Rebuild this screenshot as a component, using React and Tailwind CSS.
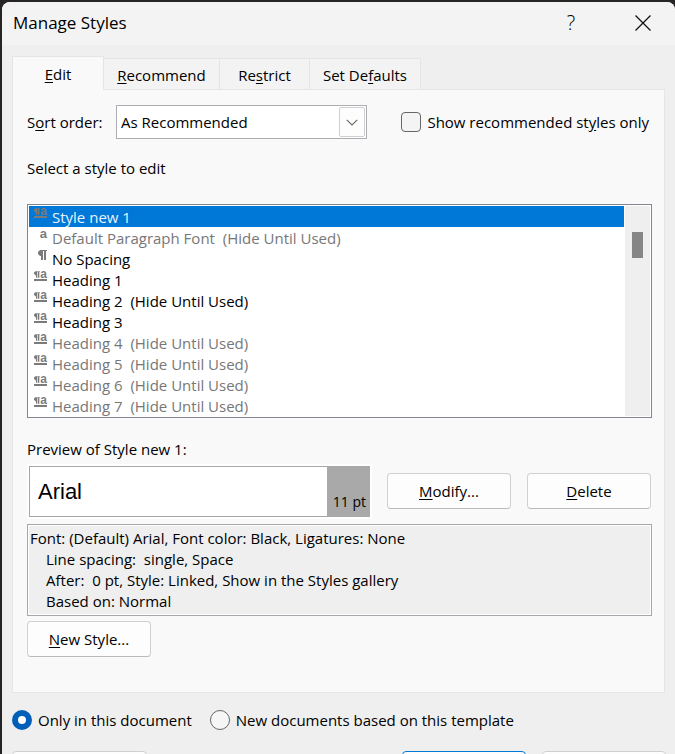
import React, { useState } from "react";

const STYLES = [
  { name: "Style new 1", kind: "linked" },
  { name: "Default Paragraph Font  (Hide Until Used)", kind: "char", dim: true },
  { name: "No Spacing", kind: "para" },
  { name: "Heading 1", kind: "linked" },
  { name: "Heading 2  (Hide Until Used)", kind: "linked" },
  { name: "Heading 3", kind: "linked" },
  { name: "Heading 4  (Hide Until Used)", kind: "linked", dim: true },
  { name: "Heading 5  (Hide Until Used)", kind: "linked", dim: true },
  { name: "Heading 6  (Hide Until Used)", kind: "linked", dim: true },
  { name: "Heading 7  (Hide Until Used)", kind: "linked", dim: true },
];

function Pilcrow({ className }) {
  return (
    <svg viewBox="0 0 9 10" className={className} fill="currentColor" aria-hidden="true">
      <path d="M2 0h7v1H8v9H6V1H5v9H3V6H2L0 4V2z" />
    </svg>
  );
}

function KindIcon({ kind }) {
  if (kind === "char") {
    return <span className="font-['Liberation_Sans',sans-serif] text-[13px] leading-[9px] font-bold">a</span>;
  }
  if (kind === "para") return <Pilcrow className="h-[10px] w-[9px]" />;
  return (
    <span className="flex h-[10px] w-[13px] items-start justify-between border-b-2 border-current">
      <Pilcrow className="h-[7px] w-[6px]" />
      <span className="font-['Liberation_Sans',sans-serif] text-xs leading-[6px] font-bold">a</span>
    </span>
  );
}

function Button({ children, className = "", ...rest }) {
  return (
    <button
      type="button"
      className={`h-9 shrink-0 rounded border bg-[#fdfdfd] ${className}`}
      {...rest}
    >
      {children}
    </button>
  );
}

function Tab({ children, active, className }) {
  return (
    <button
      type="button"
      role="tab"
      aria-selected={!!active}
      className={
        active
          ? `relative -mb-px h-[34px] border border-b-0 border-[#e5e5e5] bg-[#f9f9f9] pt-px ${className}`
          : `h-[31px] border-t border-r border-[#e5e5e5] bg-[#f3f3f3] pt-0.5 ${className}`
      }
    >
      {children}
    </button>
  );
}

function Radio({ label, checked, onChange }) {
  return (
    <label className="flex items-center gap-1.5">
      <input
        type="radio"
        name="scope"
        checked={checked}
        onChange={onChange}
        className="size-5 appearance-none rounded-full border border-[#666] bg-[#f6f6f6] checked:border-6 checked:border-[#005fb8] checked:bg-white"
      />
      <span className="pt-0.5">{label}</span>
    </label>
  );
}

export default function App() {
  const [selected, setSelected] = useState(0);
  const [scope, setScope] = useState("doc");
  const [only, setOnly] = useState(false);

  return (
    <div className="h-screen overflow-hidden bg-[#262424] pt-0.5 pl-0.5 font-['Open_Sans','Noto_Sans',sans-serif] text-[15px] leading-[21px] text-black [&_u]:underline-offset-2">
      <div className="min-h-full rounded-t-lg bg-[#efefef]">
        <header className="flex h-[43px] items-center rounded-t-lg bg-[#f3f3f3] pb-0.5 pl-[11px]">
          <h1 className="flex-1 text-[17px]">Manage Styles</h1>
          <button type="button" aria-label="Help" className="w-10 text-xl font-light">?</button>
          <button type="button" aria-label="Close" className="ml-5 flex w-16 justify-center">
            <svg viewBox="0 0 16 16" className="size-4" fill="none" stroke="#111" strokeWidth="1.3">
              <path d="M.5.5l15 15M15.5.5l-15 15" />
            </svg>
          </button>
        </header>

        <main className="px-2.5 pt-[11px]">
          <div role="tablist" className="flex items-end">
            <Tab active className="w-[92px]">
              <u>E</u>dit
            </Tab>
            <Tab className="w-[116px]">
              <u>R</u>ecommend
            </Tab>
            <Tab className="w-[90px]">
              Re<u>s</u>trict
            </Tab>
            <Tab className="w-[111px]">
              Set De<u>f</u>aults
            </Tab>
          </div>

          <section className="border border-[#e5e5e5] bg-[#f9f9f9] pt-[15px] pr-3 pb-[35px] pl-3.5">
            <div className="flex items-center">
              <label htmlFor="sort" className="w-[89px]">
                S<u>o</u>rt order:
              </label>
              <div className="grid w-[251px]">
                <select
                  id="sort"
                  className="col-start-1 row-start-1 h-[34px] appearance-none border border-[#acacb2] bg-white pl-1 outline-none"
                >
                  <option>As Recommended</option>
                  <option>Alphabetical</option>
                </select>
                <span className="pointer-events-none col-start-1 row-start-1 mr-0.5 flex h-[30px] w-[26px] items-center justify-center self-center justify-self-end rounded-xs border border-[#cfcfcf] bg-[#fdfdfd]">
                  <svg viewBox="0 0 12 7" className="h-[7px] w-3" fill="none" stroke="#666" strokeWidth="1.1">
                    <path d="M.8.8L6 6l5.200-5.200" />
                  </svg>
                </span>
              </div>
              <label className="ml-auto flex items-center gap-1.5 pr-[3px] whitespace-nowrap">
                <input
                  type="checkbox"
                  checked={only}
                  onChange={(e) => setOnly(e.target.checked)}
                  className="size-5 appearance-none rounded border border-[#666] bg-[#f4f4f4] checked:bg-[#005fb8]"
                />
                <span>
                  Show recommended st<u>y</u>les only
                </span>
              </label>
            </div>

            <p className="mt-[19px]" id="pick">
              Select a style to edit
            </p>

            <div className="mt-[25px] flex border border-[#82868f] bg-white p-px">
              <ul role="listbox" aria-labelledby="pick" className="mr-px min-w-0 flex-1">
                {STYLES.map((s, i) => (
                  <li
                    key={s.name}
                    role="option"
                    aria-selected={i === selected}
                    onClick={() => setSelected(i)}
                    className={`flex h-[21px] whitespace-pre ${
                      i === selected ? "bg-[#0078d7] text-[#e8f3ff]" : s.dim ? "text-[#777]" : ""
                    }`}
                  >
                    <span className="mr-[5px] flex w-[18px] items-start justify-end pt-0.5 text-[#7b7b7b]">
                      <KindIcon kind={s.kind} />
                    </span>
                    <span className="pt-px">{s.name}</span>
                  </li>
                ))}
              </ul>
              <div className="w-[25px] bg-[#efefef] pt-[26px]">
                <div className="mx-auto h-[26px] w-[11px] bg-[#868686]" />
              </div>
            </div>

            <p className="mt-[21px]">Preview of Style new 1:</p>

            <div className="mt-1 flex items-center">
              <div className="flex w-[345px] border-2 border-white">
                <div className="flex h-[51px] flex-1 items-center border border-r-0 border-[#a6a6ad] bg-white pl-2 font-['Liberation_Sans',Arial,sans-serif] text-[22px]">
                  Arial
                </div>
                <div className="flex w-[43px] items-end justify-end bg-[#a9a9a9] pr-1 pb-[5px] text-sm">11 pt</div>
              </div>
              <div className="ml-auto flex gap-4 pr-px pb-px">
                <Button className="w-[124px] border-[#d0d0d0] border-b-[#bababa]">
                  <u>M</u>odify...
                </Button>
                <Button className="w-[124px] border-[#d0d0d0] border-b-[#bababa]">
                  <u>D</u>elete
                </Button>
              </div>
            </div>

            <div className="mt-[5px] border border-[#a6a6ad] bg-white p-px">
              <div className="bg-[#efefef] py-0.5 pl-px whitespace-pre">
                <p>Font: (Default) Arial, Font color: Black, Ligatures: None</p>
                <div className="pl-4">
                  <p>Line spacing:  single, Space</p>
                  <p>After:  0 pt, Style: Linked, Show in the Styles gallery</p>
                  <p>Based on: Normal</p>
                </div>
              </div>
            </div>

            <Button className="mt-[5px] w-[124px] border-[#d0d0d0] border-b-[#bababa]">
              <u>N</u>ew Style...
            </Button>
          </section>

          <div className="flex gap-[18px] pt-[15px]">
            <Radio label="Only in this document" checked={scope === "doc"} onChange={() => setScope("doc")} />
            <Radio
              label="New documents based on this template"
              checked={scope === "template"}
              onChange={() => setScope("template")}
            />
          </div>

          <footer className="-mr-px flex gap-4 pt-5">
            <Button aria-label="Import or export" className="mr-auto w-[135px] border-[#d0d0d0]" />
            <Button aria-label="OK" className="w-[124px] border-[#0078d4]" />
            <Button aria-label="Cancel" className="w-[124px] border-[#d0d0d0]" />
          </footer>
        </main>
      </div>
    </div>
  );
}
